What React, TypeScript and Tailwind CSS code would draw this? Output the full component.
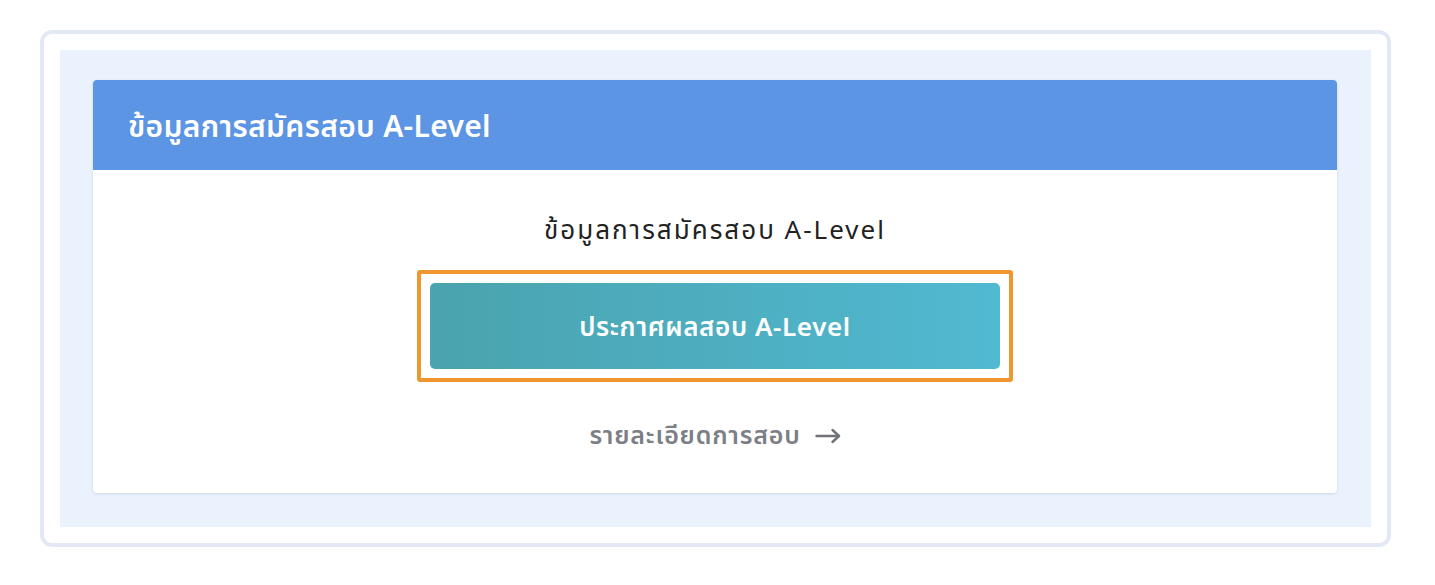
export default function App() {
  return (
    <div className="min-h-[585px] w-[1435px] bg-white pl-[40px] pt-[30px] font-['Noto_Sans','Noto_Sans_Thai',sans-serif]">
      <div className="w-[1351px] h-[517px] rounded-[12px] border-[4px] border-[#e3e9f4] bg-white p-[16px]">
        <div className="h-full bg-[#eaf3fd] pt-[30px] pb-[34px] pl-[33px] pr-[34px]">
          <div className="h-full rounded-[4px] bg-white shadow-[0_1px_3px_rgba(0,0,0,0.12)] overflow-hidden flex flex-col">
            <div className="h-[90px] bg-[#5c95e4] flex items-center pl-[35px]">
              <h2 className="text-[30px] font-semibold text-white tracking-[0.3px]">
                ข้อมูลการสมัครสอบ A-Level
              </h2>
            </div>
            <div className="flex flex-col items-center pt-[40px]">
              <p className="text-[26px] text-[#222] leading-[38px] tracking-[2px]">ข้อมูลการสมัครสอบ A-Level</p>
              <div className="mt-[22px] rounded-[3px] border-[4px] border-[#f0962f] p-[9px]">
                <button className="w-[570px] h-[86px] rounded-[5px] bg-gradient-to-r from-[#4aa3ae] to-[#51b9d2] text-white text-[26px] font-semibold tracking-[0.6px]">
                  ประกาศผลสอบ A-Level
                </button>
              </div>
              <a className="mt-[34px] text-[25px] font-semibold text-[#7c7f86] tracking-[0.8px] flex items-center gap-[14px]">
                <span>รายละเอียดการสอบ</span>
                <svg width="26" height="16" viewBox="0 0 26 16" fill="none" stroke="#6f7279" strokeWidth="2.4" strokeLinecap="round" strokeLinejoin="round" className="mt-[2px]">
                  <path d="M1.5 8H24" />
                  <path d="M17.5 2L24 8L17.5 14" />
                </svg>
              </a>
            </div>
          </div>
        </div>
      </div>
    </div>
  )
}
